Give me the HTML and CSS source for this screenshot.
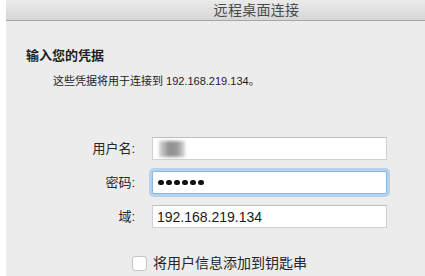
FILE: index.html
```html
<!DOCTYPE html>
<html>
<head>
    <meta charset="utf-8">
    <title>远程桌面连接</title>
    <link rel="stylesheet" href="styles.css">
</head>
<body>
    <div class="windowDiv">
        <div class="titleBar">远程桌面连接</div>

        <div class="contentDiv">
            <h1 class="heading">输入您的凭据</h1>
            <p class="description">这些凭据将用于连接到 192.168.219.134。</p>

            <div class="formGrid">
                <label class="fieldLabel">用户名:</label>
                <div class="field"><span class="blurName"></span></div>

                <label class="fieldLabel">密码:</label>
                <div class="field focused">
                    <span class="dots"><i></i><i></i><i></i><i></i><i></i><i></i></span>
                </div>

                <label class="fieldLabel">域:</label>
                <div class="field">192.168.219.134</div>
            </div>

            <div class="checkRow">
                <span class="checkBox"></span>
                <span class="checkText">将用户信息添加到钥匙串</span>
            </div>
        </div>
    </div>
</body>
</html>
```

FILE: styles.css
```css
body {
    margin: 0;
    padding: 0;
    background-color: #ffffff;
    font-family: "Liberation Sans", "Noto Sans CJK SC", sans-serif;
    overflow: hidden;
    height: 276px;
}
.windowDiv {
    margin-left: 6px;
    height: 276px;
    background-color: #ececec;
}
.titleBar {
    height: 20px;
    line-height: 20px;
    padding-left: 82px;
    border-bottom: 1px solid #a6a6a6;
    background-image: linear-gradient(180deg, #ebebeb, #d6d6d6);
    text-align: center;
    font-size: 14px;
    color: #4a4a4a;
    letter-spacing: 0.3px;
}
.contentDiv {
    display: flex;
    flex-direction: column;
}
.heading {
    margin: 27px 0 0 20px;
    font-size: 13px;
    line-height: 16px;
    font-weight: bold;
    color: #1e1e1e;
}
.description {
    margin: 10px 0 0 47px;
    font-size: 11px;
    line-height: 14px;
    color: #1e1e1e;
}
.formGrid {
    display: grid;
    grid-template-columns: 129px 235px;
    grid-auto-rows: 23px;
    column-gap: 17px;
    row-gap: 11px;
    margin-top: 49px;
    align-items: center;
}
.fieldLabel {
    text-align: right;
    font-size: 13px;
    line-height: 16px;
    color: #262626;
}
.field {
    display: flex;
    align-items: center;
    height: 23px;
    box-sizing: border-box;
    padding-left: 4px;
    background-color: #ffffff;
    border: 1px solid #d0d0d0;
    border-top-color: #bdbdbd;
    font-size: 14px;
    color: #1a1a1a;
}
.focused {
    border-color: #8fb4de;
    border-radius: 2px;
    box-shadow: 0 0 0 3px #b4d1f1;
}
.blurName {
    width: 26px;
    height: 16px;
    background-image: linear-gradient(90deg, #d8d8d8, #8e8e8e 40%, #9a9a9a 70%, #dcdcdc);
    filter: blur(1.5px);
    margin-left: 2px;
}
.dots {
    display: flex;
    gap: 2.5px;
    margin-left: 1px;
}
.dots i {
    width: 5.5px;
    height: 5.5px;
    border-radius: 50%;
    background-color: #111111;
}
.checkRow {
    display: flex;
    align-items: center;
    gap: 6px;
    margin: 27px 0 0 126px;
    height: 16px;
}
.checkBox {
    width: 13px;
    height: 13px;
    background-color: #ffffff;
    border: 1px solid #c4c4c4;
    border-radius: 3px;
}
.checkText {
    font-size: 14px;
    line-height: 16px;
    color: #262626;
}
```
